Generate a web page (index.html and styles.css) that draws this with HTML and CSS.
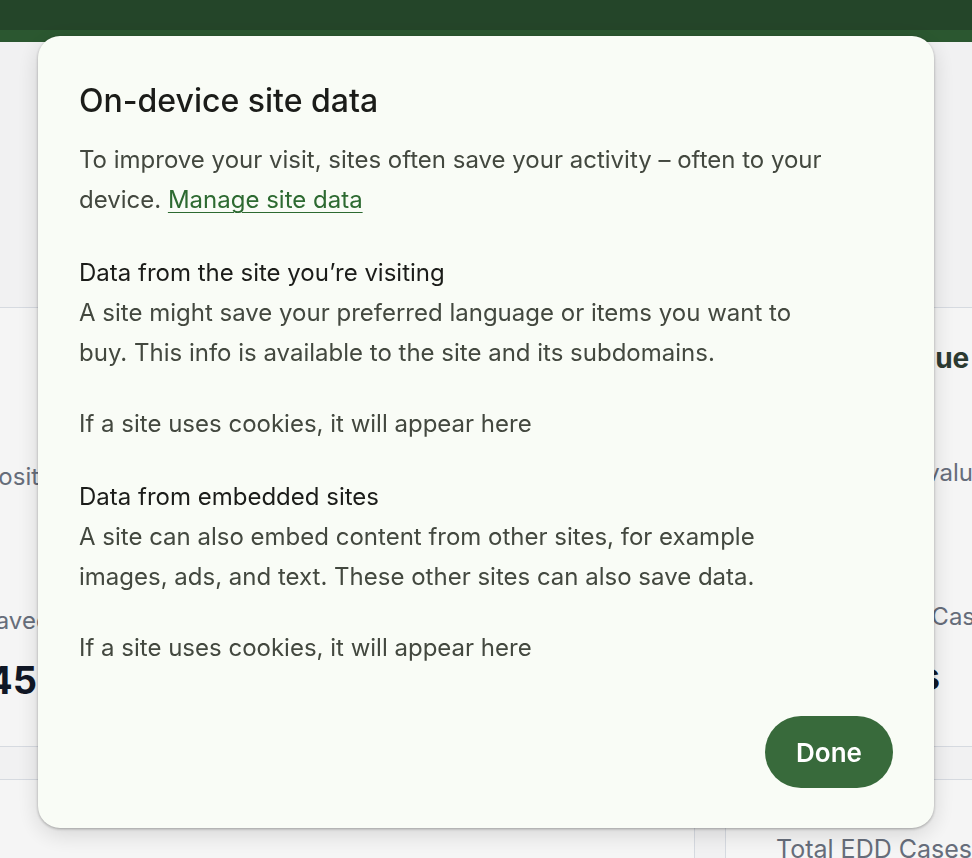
FILE: index.html
```html
<!DOCTYPE html>
<html lang="en">
<head>
<meta charset="utf-8">
<title>On-device site data</title>
<link rel="stylesheet" href="styles.css">
</head>
<body>
<div class="page">
  <header class="topbar"></header>
  <div class="band"></div>
  <main class="main">
    <div class="intro"></div>
    <div class="grid">
      <section class="card card-left">
        <div class="stats">
          <div class="stat-label stat-first">All deposits</div>
          <div class="stat-label stat-second">Time saved</div>
          <div class="stat-value">$1,456</div>
        </div>
      </section>
      <section class="card card-right">
        <div class="card-title">Total Revenue</div>
        <div class="stat-label stat-first">Approximate valuation</div>
        <div class="stat-label stat-second">Pending EDD Cases</div>
        <div class="stat-value">124 days</div>
      </section>
      <section class="card card-bottom"></section>
      <section class="card card-bottom card-bottom-right">
        <div class="stat-label">Total EDD Cases</div>
      </section>
    </div>
  </main>
</div>
<div class="scrim"></div>
<div class="dialog" role="dialog" aria-labelledby="dlg-title">
  <h1 class="dialog-title" id="dlg-title">On-device site data</h1>
  <p class="dialog-text">To improve your visit, sites often save your activity – often to your device. <a href="#" class="link">Manage site data</a></p>
  <div class="section">
    <h2 class="section-title">Data from the site you’re visiting</h2>
    <p class="dialog-text">A site might save your preferred language or items you want to buy. This info is available to the site and its subdomains.</p>
    <p class="dialog-text empty">If a site uses cookies, it will appear here</p>
  </div>
  <div class="section">
    <h2 class="section-title">Data from embedded sites</h2>
    <p class="dialog-text">A site can also embed content from other sites, for example images, ads, and text. These other sites can also save data.</p>
    <p class="dialog-text empty">If a site uses cookies, it will appear here</p>
  </div>
  <div class="actions">
    <button class="btn-done" type="button">Done</button>
  </div>
</div>
</body>
</html>
```

FILE: styles.css
```css
* { box-sizing: border-box; }
html, body {
  margin: 0;
  padding: 0;
  height: 100%;
  overflow: hidden;
}
body {
  background: #ffffff;
  font-family: Inter, "Noto Sans", "Liberation Sans", sans-serif;
  color: #1b1c19;
}
.page {
  height: 858px;
  overflow: hidden;
}
.topbar {
  height: 30px;
  background: #26482b;
}
.band {
  height: 12px;
  background: #2d5b32;
}
.main {
  background: #fbfbfc;
}
.intro {
  height: 265px;
}
.grid {
  display: grid;
  grid-template-columns: 1025px 1fr;
  column-gap: 30px;
  row-gap: 32px;
  margin-left: -330px;
}
.card {
  background: #ffffff;
  border: 1px solid #dfe3ea;
  height: 440px;
}
.card-left {
  padding-left: 249px;
}
.stats {
  display: flex;
  flex-direction: column;
}
.card-right {
  padding-left: 50px;
  border-right: none;
}
.card-title {
  margin-top: 33px;
  font-size: 28px;
  font-weight: 700;
  color: #2e3d34;
  white-space: nowrap;
}
.stat-label {
  font-size: 24px;
  color: #6b7280;
  white-space: nowrap;
}
.card-left .stat-first { margin-top: 154px; }
.card-right .stat-first { margin-top: 83px; }
.stat-second { margin-top: 115px; }
.stat-value {
  margin-top: 22px;
  font-size: 38px;
  font-weight: 700;
  color: #111827;
  white-space: nowrap;
}
.card-left .stat-value {
  margin-left: 13px;
}
.card-bottom {
  height: 200px;
}
.card-bottom-right {
  padding-left: 50px;
  padding-top: 54px;
  border-right: none;
}
.card-bottom-right .stat-label {
  font-size: 25px;
}

.scrim {
  position: fixed;
  inset: 0;
  background: rgba(0, 0, 0, 0.04);
}

.dialog {
  position: fixed;
  left: 38px;
  top: 36px;
  width: 896px;
  background: #f9fcf6;
  border-radius: 22px;
  padding: 45px 41px 40px 41px;
  box-shadow: 0 1px 3px rgba(0, 0, 0, 0.3), 0 6px 24px rgba(0, 0, 0, 0.14);
}
.dialog-title {
  margin: 0;
  font-size: 32px;
  line-height: 40px;
  font-weight: 500;
  color: #1b1c19;
}
.dialog-text {
  margin: 19px 0 0 0;
  max-width: 760px;
  font-size: 24px;
  line-height: 40px;
  color: #43483f;
}
.link {
  color: #2d6a31;
  text-decoration: underline;
  text-underline-offset: 4px;
  text-decoration-thickness: 1px;
}
.section {
  margin-top: 33px;
}
.section-title {
  margin: 0;
  font-size: 24px;
  line-height: 40px;
  font-weight: 400;
  color: #1b1c19;
}
.section .dialog-text {
  margin-top: 0;
}
.section .dialog-text.empty {
  margin-top: 31px;
}
.actions {
  display: flex;
  justify-content: flex-end;
  margin-top: 48px;
}
.btn-done {
  width: 128px;
  height: 72px;
  border: none;
  border-radius: 36px;
  background: #386a3b;
  color: #ffffff;
  font-family: Inter, "Noto Sans", "Liberation Sans", sans-serif;
  font-size: 26px;
  font-weight: 600;
  padding: 0;
}
```
